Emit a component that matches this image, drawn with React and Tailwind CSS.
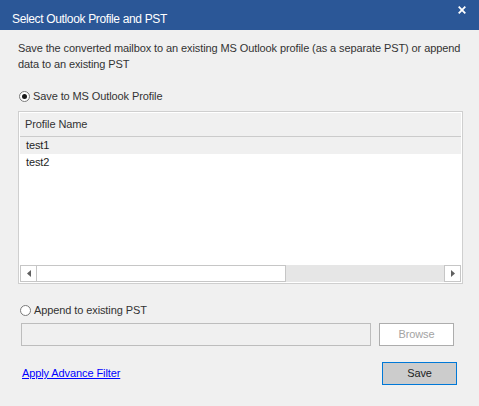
import React from 'react';

const font = { fontFamily: '"Liberation Sans", Arial, sans-serif' };

function Radio({ checked }) {
  return (
    <span className="flex h-[11px] w-[11px] items-center justify-center rounded-full border border-[#7a7a7a] bg-white">
      {checked && <span className="h-[5px] w-[5px] rounded-full bg-[#1a1a1a]" />}
    </span>
  );
}

function Arrow({ dir }) {
  return (
    <svg width="4" height="7" viewBox="0 0 4 7">
      {dir === 'left' ? <path d="M4 0 L0 3.5 L4 7 Z" fill="#606060" /> : <path d="M0 0 L4 3.5 L0 7 Z" fill="#606060" />}
    </svg>
  );
}

export default function App() {
  return (
    <div className="flex h-[406px] w-[479px] flex-col bg-[#f0f0f0] text-[11px] tracking-[-0.1px] text-[#1e1e1e]" style={font}>
      {/* title bar */}
      <div className="flex h-[30px] items-center justify-between bg-[#2b5797] pl-[12px] pr-[12px] text-white">
        <span className="pt-[7px] text-[12px] tracking-[-0.35px]">Select Outlook Profile and PST</span>
        <svg width="8" height="8" viewBox="0 0 8 8" className="-mt-[10px] mr-[1px]">
          <path d="M0.7 0.7 L7.3 7.3 M7.3 0.7 L0.7 7.3" stroke="white" strokeWidth="1.8" />
        </svg>
      </div>

      <div className="flex flex-col pl-[18px] pr-[16px]">
        <p className="mt-[10px] leading-[16px] text-[#333]">
          Save the converted mailbox to an existing MS Outlook profile (as a separate PST) or append data to an existing PST
        </p>

        <label className="mt-[16px] flex h-[16px] items-center gap-[3px] pl-[1px] text-[#333]">
          <Radio checked />
          <span>Save to MS Outlook Profile</span>
        </label>

        {/* profile list */}
        <div className="mt-[7px] flex h-[173px] w-[445px] flex-col border border-[#cfcfcf] bg-white p-[1px]">
          <div className="flex h-[24px] items-center border-b border-[#cbcbcb] bg-[#f0f0f0] pl-[5px] text-[#333]">
            Profile Name
          </div>
          <div className="flex h-[17px] items-center bg-[#f0f0f0] pl-[6px]">test1</div>
          <div className="flex h-[17px] items-center pl-[6px]">test2</div>
          <div className="flex-1" />
          <div className="flex h-[17px] items-stretch bg-[#e6e6e6]">
            <div className="flex w-[17px] items-center justify-center border border-[#c6c6c6] bg-white">
              <Arrow dir="left" />
            </div>
            <div className="w-[249px] border border-l-0 border-[#c6c6c6] bg-white" />
            <div className="flex-1" />
            <div className="flex w-[17px] items-center justify-center border border-[#c6c6c6] bg-white">
              <Arrow dir="right" />
            </div>
          </div>
        </div>

        <label className="mt-[18px] flex h-[16px] items-center gap-[3px] pl-[2px] text-[#333]">
          <Radio />
          <span>Append to existing PST</span>
        </label>

        <div className="mt-[5px] flex h-[23px] gap-[8px] pl-[3px]">
          <div className="w-[350px] border border-[#bdbdbd] bg-[#f0f0f0]" />
          <button className="w-[75px] border border-[#adadad] bg-white text-[#a3a3a3]">Browse</button>
        </div>

        <div className="mt-[16px] flex items-center justify-between pl-[4px]">
          <a href="#" className="text-[#0000ff] underline">Apply Advance Filter</a>
          <button className="mr-[6px] h-[23px] w-[75px] border border-[#0078d7] bg-[#cccccc] text-[#1e1e1e]">
            Save
          </button>
        </div>
      </div>
    </div>
  );
}
